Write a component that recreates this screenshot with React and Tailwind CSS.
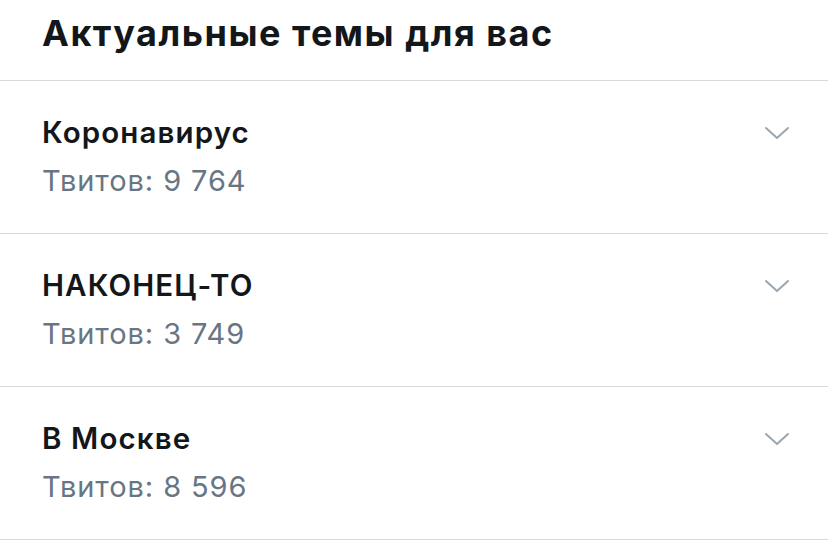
const topics = [
  { name: "Коронавирус", count: "9 764" },
  { name: "НАКОНЕЦ-ТО", count: "3 749" },
  { name: "В Москве", count: "8 596" },
];

function Chevron() {
  return (
    <svg width="26" height="16" viewBox="0 0 26 16" fill="none" className="text-[#9aa6b0]">
      <path d="M2 3l11 10 11-10" stroke="currentColor" strokeWidth="2" strokeLinecap="round" strokeLinejoin="round" />
    </svg>
  );
}

export default function App() {
  return (
    <div className="h-[557px] w-[828px] overflow-hidden bg-white font-['Inter',sans-serif] text-[#14171a]">
      <header className="flex h-[81px] items-start border-b border-[#d6d9db] pl-[42px] pt-[15px]">
        <h1 className="text-[36px] font-bold leading-[36px] tracking-[1.5px]">Актуальные темы для вас</h1>
      </header>
      {topics.map((t) => (
        <div key={t.name} className="flex h-[153px] items-start justify-between border-b border-[#d6d9db] pl-[42px] pr-[38px]">
          <div className="flex flex-col pt-[35px]">
            <span className="text-[29.5px] font-semibold leading-[32px] tracking-[1.1px]">{t.name}</span>
            <span className="mt-[17px] text-[29px] leading-[32px] tracking-[0.9px] text-[#687684]">Твитов: {t.count}</span>
          </div>
          <div className="pt-[44px]">
            <Chevron />
          </div>
        </div>
      ))}
    </div>
  );
}
